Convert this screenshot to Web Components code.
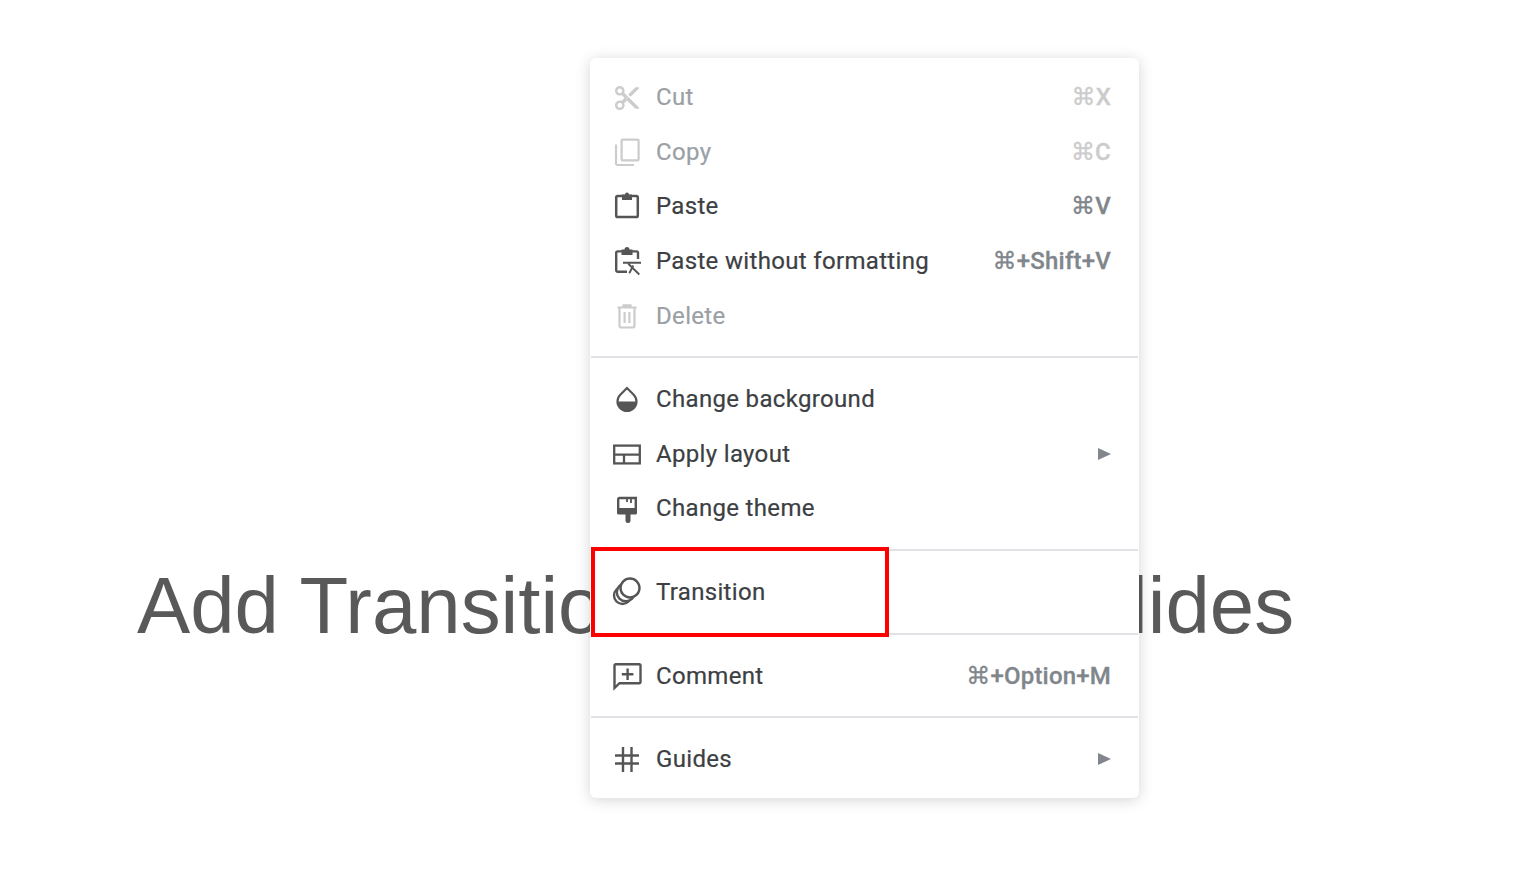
<!DOCTYPE html>
<html>
<head>
<meta charset="utf-8">
<style>
  html, body { margin: 0; background: #fff; }
  body { width: 1536px; height: 879px; overflow: hidden; }
</style>
</head>
<body>
<slide-stage>
  <context-menu>
    <menu-section>
      <menu-item label="Cut" shortcut="⌘X" icon="cut" disabled></menu-item>
      <menu-item label="Copy" shortcut="⌘C" icon="copy" disabled></menu-item>
      <menu-item label="Paste" shortcut="⌘V" icon="paste"></menu-item>
      <menu-item label="Paste without formatting" shortcut="⌘+Shift+V" icon="pastePlain"></menu-item>
      <menu-item label="Delete" icon="trash" disabled></menu-item>
    </menu-section>
    <menu-section>
      <menu-item label="Change background" icon="drop"></menu-item>
      <menu-item label="Apply layout" icon="layout" submenu></menu-item>
      <menu-item label="Change theme" icon="brush"></menu-item>
    </menu-section>
    <menu-section>
      <menu-item label="Transition" icon="transition"></menu-item>
    </menu-section>
    <menu-section>
      <menu-item label="Comment" shortcut="⌘+Option+M" icon="comment"></menu-item>
    </menu-section>
    <menu-section>
      <menu-item label="Guides" icon="guides" submenu></menu-item>
    </menu-section>
  </context-menu>
  <red-mark></red-mark>
</slide-stage>

<script>
// icons are drawn on a 30x30 box, currentColor
const icons = {
  cut: `<path transform="translate(.6 1.6) scale(1.2)" fill="currentColor" d="M9.64 7.64c.23-.5.36-1.05.36-1.64 0-2.21-1.79-4-4-4S2 3.79 2 6s1.79 4 4 4c.59 0 1.14-.13 1.64-.36L10 12l-2.36 2.36C7.14 14.13 6.59 14 6 14c-2.21 0-4 1.79-4 4s1.79 4 4 4 4-1.790 4-4c0-.59-.13-1.14-.36-1.64L12 14l7 7h3v-1L9.64 7.64zM6 8c-1.1 0-2-.89-2-2s.9-2 2-2 2 .89 2 2-.9 2-2 2zm0 12c-1.1 0-2-.89-2-2s.9-2 2-2 2 .89 2 2-.9 2-2 2zm6-7.500c-.28 0-.5-.22-.5-.5s.22-.5.5-.5.5.22.5.5-.22.5-.5.5zM19 3l-6 6 2 2 7-7V3z"/>`,
  copy: `<g fill="none" stroke="currentColor" stroke-width="2.2"><rect x="9.6" y="2.6" width="17" height="20.8" rx="1"/><path d="M4 7.5V26.5a1.5 1.5 0 0 0 1.5 1.5H22"/></g>`,
  paste: `<rect x="4.2" y="5" width="21.6" height="21" rx="1.6" fill="none" stroke="currentColor" stroke-width="2.5"/><path d="M10 3.5h3a2 2 0 0 1 4 0h3V9H10z" fill="currentColor"/>`,
  pastePlain: `<path d="M15 25.8H5.8a1.6 1.6 0 0 1-1.6-1.6V7a1.6 1.6 0 0 1 1.6-1.6H24.4A1.6 1.6 0 0 1 26 7V13" fill="none" stroke="currentColor" stroke-width="2.4"/><path d="M9.5 3.5h3a2.5 2.5 0 0 1 5 0h3V9h-11z" fill="currentColor"/><path d="M11 16.8H29M16.300 17.800 27.300 28.500M21.300 19.500 17.300 27.200" fill="none" stroke="currentColor" stroke-width="1.9"/>`,
  trash: `<g fill="none" stroke="currentColor" stroke-width="2.2"><path d="M7.5 7V24.5a2 2 0 0 0 2 2H20.500a2 2 0 0 0 2-2V7"/><path d="M5.500 6.500H24.500M11.500 6V4.300h7V6"/><path d="M12.600 11V22M17.400 11V22"/></g>`,
  drop: `<path d="M15 4 8.300 10.700a9.500 9.500 0 1 0 13.400 0z" fill="none" stroke="currentColor" stroke-width="2.2"/><path d="M5.500 17.500a9.500 9.500 0 0 0 19 0z" fill="currentColor"/>`,
  layout: `<g fill="none" stroke="currentColor" stroke-width="2.300"><rect x="2.200" y="6.600" width="25.600" height="17.800"/><path d="M2.200 15.700H27.800M12 15.700V24.400"/></g>`,
  brush: `<path d="M6.200 17V6.200a1.200 1.200 0 0 1 1.200-1.200H23.800V17" fill="none" stroke="currentColor" stroke-width="2.400"/><path d="M5 15H25V20a1.500 1.500 0 0 1-1.500 1.500H18.500V27.500a2.500 2.500 0 0 1-5 0V21.500H6.500A1.500 1.500 0 0 1 5 20z" fill="currentColor"/><path d="M15 5.500V9M19 5.500V10" stroke="currentColor" stroke-width="1.800"/>`,
  transition: `<g fill="#fff" stroke="currentColor" stroke-width="2.400"><circle cx="10.500" cy="18.500" r="8.500"/><circle cx="13.800" cy="15.200" r="9"/><circle cx="18" cy="11" r="9.500"/></g>`,
  comment: `<path d="M2.500 4.500A1.200 1.200 0 0 1 3.700 3.300H27.300A1.200 1.200 0 0 1 28.500 4.500V21A1.200 1.200 0 0 1 27.300 22.200H7.500L2.500 27z" fill="none" stroke="currentColor" stroke-width="2.400"/><path d="M15.600 7.500V19M9.800 13.300H21.400" stroke="currentColor" stroke-width="2.400"/>`,
  guides: `<path d="M11 3V28M19.500 3V28M3 11.500H27M3 19.500H27" fill="none" stroke="currentColor" stroke-width="2.400"/>`
};

const stageTemplate = document.createElement('template');
stageTemplate.innerHTML = `
<style>
  :host { display: flex; position: relative; width: 1536px; height: 879px; align-items: flex-start; justify-content: flex-start; }
  h1 {
    margin: 558px 0 0 137px;
    font: 400 79.75px/1.2 "Liberation Sans", Arial, sans-serif;
    color: #595959;
    white-space: nowrap;
  }
</style>
<h1>Add Transitions to Google Slides</h1>
<slot></slot>
`;

class SlideStage extends HTMLElement {
  constructor() {
    super();
    this.attachShadow({ mode: 'open' });
    this.shadowRoot.appendChild(stageTemplate.content.cloneNode(true));
  }
}

const menuTemplate = document.createElement('template');
menuTemplate.innerHTML = `
<style>
  :host {
    display: block;
    position: absolute;
    left: 590px;
    top: 58px;
    width: 549px;
    height: 740px;
    box-sizing: border-box;
    background: #fff;
    border-radius: 6px;
    box-shadow: 0 2px 14px rgba(60, 64, 67, .22);
    font-family: Roboto, "Noto Sans", sans-serif;
  }
  .inner { display: flex; flex-direction: column; }
</style>
<div class="inner"><slot></slot></div>
`;

class ContextMenu extends HTMLElement {
  constructor() {
    super();
    this.attachShadow({ mode: 'open' });
    this.shadowRoot.appendChild(menuTemplate.content.cloneNode(true));
  }
}

const sectionTemplate = document.createElement('template');
sectionTemplate.innerHTML = `
<style>
  :host {
    display: block;
    padding: 13.5px 0;
    margin: 0 1px;
    border-bottom: 2px solid #e1e2e5;
  }
  :host(:first-child) { padding-top: 12px; }
  :host(:last-child) { border-bottom: 0; padding-bottom: 12px; }
</style>
<slot></slot>
`;

class MenuSection extends HTMLElement {
  constructor() {
    super();
    this.attachShadow({ mode: 'open' });
    this.shadowRoot.appendChild(sectionTemplate.content.cloneNode(true));
  }
}

const itemTemplate = document.createElement('template');
itemTemplate.innerHTML = `
<style>
  :host {
    display: flex;
    align-items: center;
    height: 54.600px;
    padding: 0 27px 0 21px;
    color: #3c4043;
    font-size: 24px;
    letter-spacing: .33px;
    -webkit-text-stroke: .2px currentColor;
  }
  svg.icon { width: 30px; height: 30px; flex: none; color: #555; margin-right: 14px; }
  .label { flex: 1; white-space: nowrap; }
  .shortcut { color: #80868b; font-weight: 500; letter-spacing: .2px; -webkit-text-stroke: .3px currentColor; font-family: Roboto, "DejaVu Sans", sans-serif; }
  .arrow { width: 0; height: 0; border-left: 13px solid #80868b; border-top: 6px solid transparent; border-bottom: 6px solid transparent; }
  :host([disabled]) { color: #9aa0a6; }
  :host([disabled]) svg.icon { color: #ccc; }
  :host([disabled]) .shortcut { color: #ccc; }
</style>
<svg class="icon" viewBox="0 0 30 30"></svg>
<span class="label"></span>
`;

class MenuItem extends HTMLElement {
  constructor() {
    super();
    this.attachShadow({ mode: 'open' });
    this.shadowRoot.appendChild(itemTemplate.content.cloneNode(true));

    this.shadowRoot.querySelector('.label').textContent = this.getAttribute('label');
    this.shadowRoot.querySelector('svg').innerHTML = icons[this.getAttribute('icon')];

    if (this.hasAttribute('shortcut')) {
      const key = document.createElement('span');
      key.className = 'shortcut';
      key.textContent = this.getAttribute('shortcut');
      this.shadowRoot.appendChild(key);
    }
    if (this.hasAttribute('submenu')) {
      const arrow = document.createElement('span');
      arrow.className = 'arrow';
      this.shadowRoot.appendChild(arrow);
    }
  }
}

const markTemplate = document.createElement('template');
markTemplate.innerHTML = `
<style>
  :host {
    display: block;
    position: absolute;
    left: 591px;
    top: 547px;
    width: 298px;
    height: 90px;
    box-sizing: border-box;
    border: 4px solid #fe0000;
  }
</style>
`;

class RedMark extends HTMLElement {
  constructor() {
    super();
    this.attachShadow({ mode: 'open' });
    this.shadowRoot.appendChild(markTemplate.content.cloneNode(true));
  }
}

customElements.define('slide-stage', SlideStage);
customElements.define('context-menu', ContextMenu);
customElements.define('menu-section', MenuSection);
customElements.define('menu-item', MenuItem);
customElements.define('red-mark', RedMark);
</script>
</body>
</html>
